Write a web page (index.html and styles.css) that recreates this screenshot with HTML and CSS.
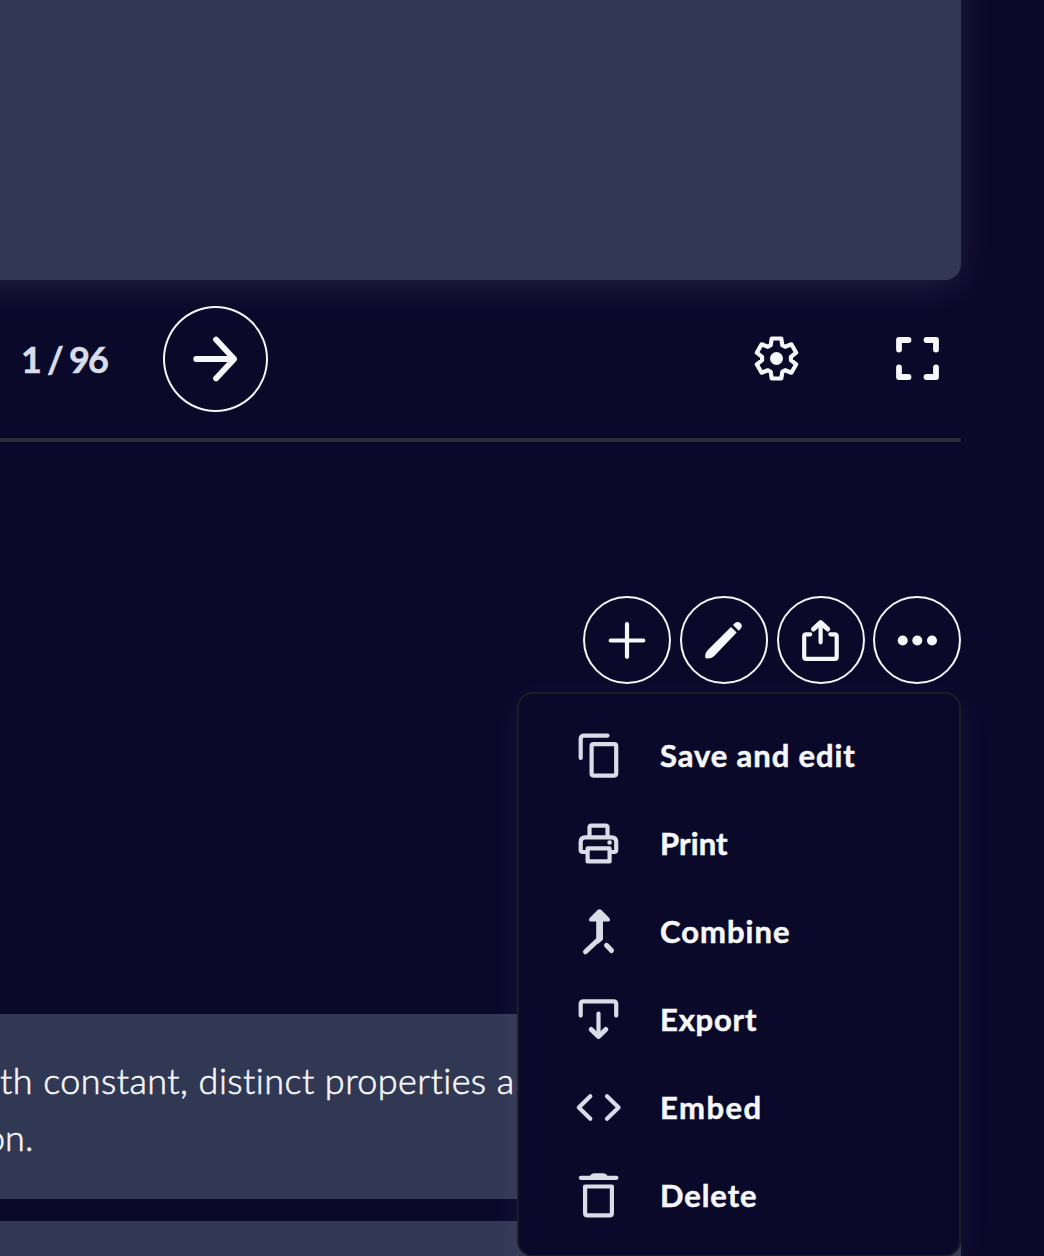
FILE: index.html
```html
<!DOCTYPE html>
<html lang="en">
<head>
<meta charset="utf-8">
<title>Flashcards</title>
<link rel="stylesheet" href="styles.css">
</head>
<body>
<main class="page">
  <div class="flashcard"></div>
  <div class="controls">
    <span class="counter">1 / 96</span>
    <button class="round next" aria-label="Next"><svg width="48" height="48" viewBox="0 0 48 48" class="line w6"><path d="M4.200 24H42M24 4.500L42.200 24L24 43.500"/></svg></button>
    <div class="tools">
      <svg width="48" height="48" viewBox="-24.500 -23.500 48 48" class="line w4"><path d="M-5.800-13.300L-4.800-20H4.800L5.800-13.300L8.600-11.700L14.900-14.200L19.700-5.800L14.400-1.600V1.600L19.700 5.800L14.900 14.200L8.600 11.700L5.800 13.300L4.800 20H-4.800L-5.800 13.300L-8.600 11.700L-14.900 14.200L-19.700 5.800L-14.400 1.600V-1.600L-19.700-5.800L-14.900-14.200L-8.600-11.700Z"/><circle r="6.500" class="solid"/></svg>
      <svg width="48" height="48" viewBox="-.500 .500 48 48" class="line w6"><path d="M5.500 15V5.500H15M33 5.500H42.500V15M42.500 33V42.500H33M15 42.500H5.500V33"/></svg>
    </div>
  </div>
  <hr class="divider">
  <div class="actions">
    <button class="round" aria-label="Add"><svg width="48" height="48" viewBox="0 0 48 48" class="line w4"><path d="M24 8.200V40.800M7.700 24.500H40.300"/></svg></button>
    <button class="round" aria-label="Edit"><svg width="48" height="48" viewBox="0 0 48 48"><path class="solid" d="M31 11L36.700 16.600L14 40.200Q11.500 42.500 8 42.600Q5 42.600 5.100 40Q5.400 36.200 7.600 34.200ZM33 9L35 7Q37.800 4.800 40.600 7.300Q43 10 40.700 12.800L38.700 14.700Z"/></svg></button>
    <button class="round" aria-label="Share"><svg width="48" height="48" viewBox="0 0 48 48" class="line w4"><path d="M13.200 18.300H9.200Q7.200 18.300 7.200 20.300V40.900Q7.200 42.900 9.200 42.900H37.700Q39.700 42.900 39.700 40.900V20.300Q39.700 18.300 37.700 18.300H33.300M23.600 26.300V7"/><path d="M16.500 13L23.600 6.700L30.700 13" class="w5"/></svg></button>
    <button class="round last" aria-label="More"><svg width="48" height="48" viewBox="0 0 48 48" class="solid"><circle cx="9.700" cy="24.500" r="5"/><circle cx="24.300" cy="24.500" r="5"/><circle cx="39" cy="24.500" r="5"/></svg></button>
    <nav class="menu">
      <a class="item"><svg width="48" height="48" viewBox="0 0 48 48" class="line w4"><path d="M33.500 3.600H10Q6.700 3.600 6.700 6.900V26"/><rect x="17.600" y="12.200" width="24.600" height="31.400" rx="2"/></svg><span class="t-save">Save and edit</span></a>
      <a class="item"><svg width="48" height="48" viewBox="0 0 48 48" class="line w4"><path d="M15.500 16V7.500Q15.500 5.600 17.400 5.600H31.500Q33.500 5.600 33.500 7.500V16M12.500 32H8.700Q6.700 32 6.700 30V22Q6.700 17.400 11.300 17.400H37.600Q42.200 17.400 42.200 22V30Q42.200 32 40.200 32H37"/><rect x="13.600" y="28.400" width="22" height="13"/><circle cx="35.600" cy="22.500" r="2.300" class="solid"/></svg><span class="t-print">Print</span></a>
      <a class="item"><svg width="48" height="48" viewBox="0 0 48 48" class="line w5"><path d="M25.600 12V30.500L11.500 43.800M32.500 37.300L37.500 42.500"/><path class="solid" d="M22.200 10H29V31.500L24 36L22.200 31ZM23.600 2Q25.500 .3 27.400 2L35.500 10.300Q37 13.600 34 13.600H17Q14 13.600 15.500 10.300Z"/></svg><span class="t-combine">Combine</span></a>
      <a class="item"><svg width="48" height="48" viewBox="0 0 48 48" class="line w4"><path d="M6.700 19.500V8Q6.700 5.300 9.400 5.300H39.500Q42.200 5.300 42.200 8V19.500M24.500 17.500V40.500"/><path class="w5" d="M17.200 33.500L24.500 40.500L31.800 33.500"/></svg><span class="t-export">Export</span></a>
      <a class="item"><svg width="48" height="48" viewBox="0 0 48 48" class="line w4"><path d="M16.300 12.200L4.800 23.500L16.300 34.800"/><path d="M33 12.200L44.600 23.500L33 34.800"/></svg><span class="t-embed">Embed</span></a>
      <a class="item"><svg width="48" height="48" viewBox="0 0 48 48" class="line w4"><path d="M6.900 5.800H42.400"/><path class="solid" d="M16 4Q17 1.300 20 1.300H29.500Q32.500 1.300 33.500 4Z"/><path d="M11.100 14.500H37.900V41Q37.900 43.400 35.500 43.400H13.500Q11.100 43.400 11.100 41Z"/></svg><span class="t-delete">Delete</span></a>
    </nav>
  </div>
  <section class="terms">
    <article class="term"><p class="first">th constant, distinct properties a</p><p class="second">on.</p></article>
    <article class="term"></article>
  </section>
</main>
</body>
</html>
```
FILE: styles.css
```css
* { box-sizing: border-box; }
body { margin: 0; background: #0a092a; font-family: Lato, "Open Sans", sans-serif; font-variant-ligatures: none; }
.page { width: 1044px; height: 1256px; padding-right: 83px; overflow: hidden; display: flex; flex-direction: column; color: #f6f7fb; }
.flashcard { flex: none; height: 380px; margin: -100px 0 0 -100px; background: #313853; border-bottom-right-radius: 16px; box-shadow: 0 8px 36px rgba(246, 213, 255, .1); }
.controls { flex: none; height: 158px; display: flex; align-items: center; padding-left: 21px; }
.counter { width: 142px; font-size: 36px; line-height: 48px; font-weight: 700; letter-spacing: -1.800px; color: #d9dde8; white-space: nowrap; -webkit-text-stroke: .500px currentColor; }
.round { flex: none; width: 88px; height: 88px; padding: 0; border: 2px solid #f6f7fb; border-radius: 50%; background: none; color: inherit; display: flex; align-items: center; justify-content: center; }
.next { width: 105px; height: 106px; }
.last { margin-left: -1px; }
.tools { margin-left: auto; display: flex; gap: 93px; padding-right: 20px; }
svg { display: block; flex: none; overflow: visible; }
.line { fill: none; stroke: currentColor; stroke-linecap: round; stroke-linejoin: round; }
.w4 { stroke-width: 4.200; }
.w5 { stroke-width: 5; }
.w6 { stroke-width: 5.800; }
.solid { fill: currentColor; stroke: none; }
.divider { flex: none; width: 100%; height: 4px; margin: 0; border: 0; border-radius: 0 2px 2px 0; background: #2b2d3a; }
.actions { flex: none; position: relative; display: flex; justify-content: flex-end; gap: 9px; margin-top: 154px; }
.menu { position: absolute; z-index: 1; top: 96px; right: 0; width: 444px; height: 565px; padding: 18px 0 0 55px; border: 2px solid #1b1d27; border-radius: 16px; background: #0a092a; box-shadow: 0 8px 32px rgba(246, 213, 255, .07); }
.item { display: flex; align-items: center; gap: 38px; height: 88px; color: #d9dde8; font-size: 31px; line-height: 40px; font-weight: 700; white-space: nowrap; }
.item span { color: #f6f7fb; padding-bottom: 2px; -webkit-text-stroke: .500px currentColor; }
.t-save { letter-spacing: .900px; }
.t-print { letter-spacing: .100px; }
.t-combine { letter-spacing: 1px; }
.t-export { letter-spacing: .800px; }
.t-embed { letter-spacing: 1.500px; }
.t-delete { letter-spacing: .900px; }
.terms { flex: none; display: flex; flex-direction: column; gap: 22px; margin-top: 330px; }
.term { height: 185px; padding-top: 38px; background: #313853; }
.term p { margin: 0; font-size: 36px; line-height: 57px; font-weight: 300; white-space: nowrap; -webkit-text-stroke: .600px currentColor; }
.first { letter-spacing: .430px; }
.second { text-indent: -15px; }
```
